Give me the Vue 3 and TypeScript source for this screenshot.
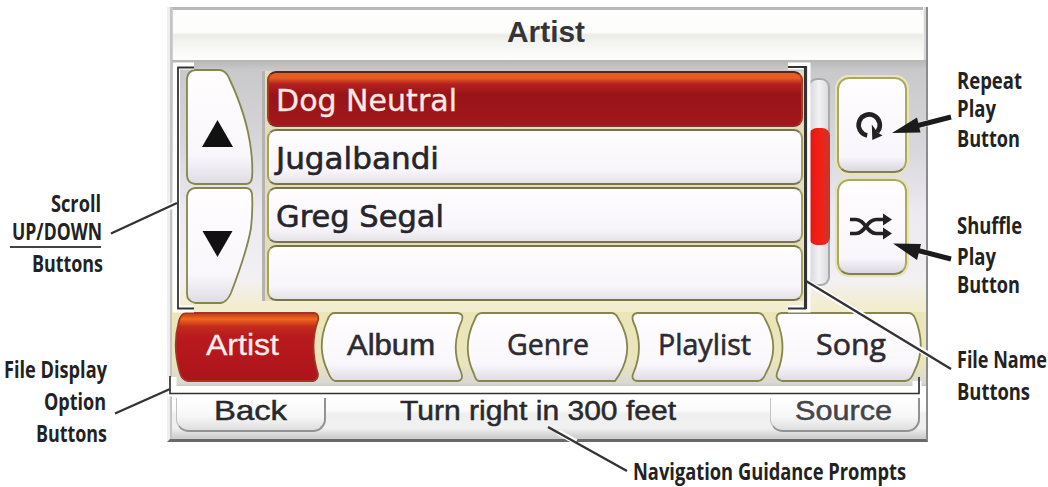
<script setup lang="ts">
import { h, type FunctionalComponent } from 'vue'

interface FitProps { text: string; w: number; cap: number; size: number }

// One line of text set to an exact measure; the box spans cap height to baseline.
const FitText: FunctionalComponent<FitProps> = (p) =>
  h('svg', { width: p.w, height: p.cap, style: 'overflow:visible;display:block;flex:none' }, [
    h('text', {
      x: 0, y: p.cap, 'font-size': p.size, fill: 'currentColor',
      textLength: p.w, lengthAdjust: 'spacingAndGlyphs',
    }, p.text),
  ])
FitText.props = ['text', 'w', 'cap', 'size']

const files = [
  { name: 'Dog Neutral', w: 181, active: true },
  { name: 'Jugalbandi', w: 163, active: false },
  { name: 'Greg Segal', w: 168, active: false },
  { name: '', w: 0, active: false },
]

interface Tab { name: string; w: number; x: number; tw: number; d: string; font: string; active?: boolean }
const tabs: Tab[] = [
  { name: 'Artist', w: 146, x: 31, tw: 73, font: 'arial', active: true,
    d: 'M10 1 H140 Q144 2 143 8 Q134 34 143 62 Q143 68 138 69 H13 Q7 68 5 61 Q-3 34 4 9 Q6 2 10 1Z' },
  { name: 'Album', w: 146, x: 26, tw: 88, font: 'arial',
    d: 'M13 1 H137 Q143 2 141 8 Q129 35 140 60 Q143 68 137 69 H14 Q10 68 7 60 Q-5 35 6 9 Q9 1 13 1Z' },
  { name: 'Genre', w: 165, x: 40, tw: 82, font: 'humanist',
    d: 'M15 1 H144 Q149 1 151 6 Q169 35 152 63 L148 69 H12 Q9 69 7 62 Q-6 35 8 7 Q10 1 15 1Z' },
  { name: 'Playlist', w: 144, x: 26, tw: 93, font: 'humanist',
    d: 'M5 1 H126 Q131 1 133 7 Q149 35 134 61 Q131 69 126 69 H5 Q-1 68 1 62 Q13 35 1 9 Q-1 2 5 1Z' },
  { name: 'Song', w: 146, x: 40, tw: 70, font: 'humanist',
    d: 'M5 1 H132 Q137 1 139 6 Q151 35 138 60 Q135 69 129 69 H6 Q-1 67 1 61 Q12 35 1 9 Q-1 2 5 1Z' },
]
</script>

<template>
  <figure class="figure">
    <svg class="defs" width="0" height="0">
      <defs>
        <linearGradient id="key" x1="0" y1="0" x2="0" y2="1">
          <stop offset="0" stop-color="#fffdfd" /><stop offset=".75" stop-color="#faf7fc" /><stop offset="1" stop-color="#dedce2" />
        </linearGradient>
        <linearGradient id="hot" x1="0" y1="0" x2="0" y2="1">
          <stop offset="0" stop-color="#bd3a12" /><stop offset=".09" stop-color="#f0681f" /><stop offset=".2" stop-color="#c32a1c" />
          <stop offset=".35" stop-color="#b81a1e" /><stop offset="1" stop-color="#ad141b" />
        </linearGradient>
      </defs>
    </svg>

    <aside class="notes notes-left">
      <div class="note scroll-note">
        <FitText text="Scroll" :w="50" :cap="17" :size="24" />
        <FitText class="up-down" text="UP/DOWN" :w="90" :cap="17" :size="24" />
        <i class="rule"></i>
        <FitText class="nudge" text="Buttons" :w="71" :cap="17" :size="24" />
      </div>
      <div class="note option-note">
        <FitText text="File Display" :w="103" :cap="17" :size="24" />
        <FitText class="option-word" text="Option" :w="62" :cap="17" :size="24" />
        <FitText text="Buttons" :w="71" :cap="17" :size="24" />
      </div>
    </aside>

    <main class="device">
      <header class="title"><FitText text="Artist" :w="78" :cap="21" :size="29" /></header>

      <section class="panel">
        <nav class="scrollers">
          <button class="scroller" aria-label="Up">
            <svg width="68" height="118" viewBox="0 0 68 118">
              <path class="key" d="M9 2 H34 Q40 3 43 10 Q61 48 65 82 Q67 98 66 110 Q65 116 60 116 H9 Q1 115 1 107 V10 Q2 3 9 2Z" />
              <path fill="#111" d="M31.5 52 L47 79 H16Z" />
            </svg>
          </button>
          <button class="scroller" aria-label="Down">
            <svg width="68" height="118" viewBox="0 0 68 118">
              <path class="key" d="M9 2 H60 Q65 2 66 8 Q67 23 65 42 Q61 65 45 107 Q41 116 35 117 H9 Q1 115 1 108 V10 Q2 3 9 2Z" />
              <path fill="#111" d="M16.5 45 H46.5 L31.5 71Z" />
            </svg>
          </button>
        </nav>
        <ul class="files">
          <li v-for="(f, i) in files" :key="i" class="file" :class="{ active: f.active }">
            <FitText v-if="f.name" :text="f.name" :w="f.w" :cap="22" :size="30" />
          </li>
        </ul>
        <div class="track"><div class="thumb"></div></div>
        <div class="modes">
          <button class="mode" aria-label="Repeat">
            <svg class="repeat-icon" width="30" height="30" viewBox="0 0 30 30">
              <path d="M13.2 25.4 A10.6 10.6 0 1 1 23.2 22" fill="none" stroke="#222" stroke-width="4.6" />
              <path d="M17.8 14.5 L18.3 30 L28.5 25.5 L23.6 22.5Z" fill="#222" />
            </svg>
          </button>
          <button class="mode" aria-label="Shuffle">
            <svg width="44" height="28" viewBox="0 0 44 28">
              <path d="M1 6.5 H7 C16 6.5 18 20.500 27 20.500 H36 M1 20.500 H7 C16 20.500 18 6.500 27 6.500 H36" fill="none" stroke="#222" stroke-width="3.700" />
              <path d="M34 .5 L43 6.500 L34 12.500Z M34 14.500 L43 20.500 L34 26.500Z" fill="#222" />
            </svg>
          </button>
        </div>
      </section>

      <nav class="tabs">
        <button v-for="t in tabs" :key="t.name" class="tab" :class="[t.font, { active: t.active }]">
          <svg :width="t.w" height="71">
            <path :d="t.d" />
            <text :x="t.x" y="42.5" :textLength="t.tw" lengthAdjust="spacingAndGlyphs">{{ t.name }}</text>
          </svg>
        </button>
      </nav>

      <footer class="status">
        <button class="soft"><FitText text="Back" :w="73" :cap="20" :size="28" /></button>
        <FitText class="prompt" text="Turn right in 300 feet" :w="276" :cap="20" :size="27.5" />
        <button class="soft source"><FitText text="Source" :w="97" :cap="20" :size="28" /></button>
      </footer>
    </main>

    <aside class="notes notes-right">
      <div class="note repeat-note">
        <FitText text="Repeat" :w="65" :cap="17" :size="24" />
        <FitText class="tight" text="Play" :w="39" :cap="17" :size="24" />
        <FitText text="Button" :w="63" :cap="17" :size="24" />
      </div>
      <div class="note shuffle-note">
        <FitText class="wide" text="Shuffle" :w="65" :cap="17" :size="24" />
        <FitText text="Play" :w="39" :cap="17" :size="24" />
        <FitText text="Button" :w="63" :cap="17" :size="24" />
      </div>
      <div class="note file-note">
        <FitText text="File Name" :w="90" :cap="17" :size="24" />
        <FitText text="Buttons" :w="73" :cap="17" :size="24" />
      </div>
    </aside>

    <figcaption class="caption">
      <FitText text="Navigation Guidance Prompts" :w="273" :cap="17" :size="24" />
    </figcaption>

    <svg class="callouts" width="1048" height="487">
      <g fill="none" stroke="#fff">
        <path stroke-width="7" d="M194 66 H176.500 V309 H194" />
        <path stroke-width="7" d="M788 66 H807 V309 H788" />
        <path stroke-width="9" d="M172 377 V392 H917 V381" />
        <path stroke-width="6" d="M807 282 L929 355 M558 432 L576 442 M165 209 L176 204 M898 130.500 L948 118 M898 246 L948 258" />
      </g>
      <g fill="none" stroke="#333">
        <path stroke-width="1.800" d="M194 67.500 H178 V308.500 H194" />
        <path stroke-width="1.700" d="M170 376 V393.500 H919 V377" />
        <path stroke-width="2" d="M788 67 H805 M788 308.500 H806" />
        <path stroke-width="3.200" d="M805.500 66 V309" />
        <path stroke-width="2.400" d="M111 233.500 L177 203 M115 413.500 L170 389 M806 281 L951 369 M548 427 L627 471" />
        <path stroke-width="5" stroke="#1b1b1b" d="M916 126 L951 117 M916 250 L951 259" />
      </g>
      <path fill="#1b1b1b" d="M892 133 L917 117.500 L920.500 132.500Z M893 243.500 L921 244 L917 260Z" />
    </svg>
  </figure>
</template>

<style>
body { background: #fff; }
</style>

<style scoped>
.figure {
  position: relative;
  display: grid;
  grid-template-columns: 167px 761px 120px;
  grid-template-rows: 442px 45px;
  width: 1048px;
  height: 487px;
  margin: 0;
  overflow: hidden;
  font-family: "Liberation Sans", sans-serif;
  color: #222;
}
.defs, .callouts { position: absolute; left: 0; top: 0; pointer-events: none; }
button { border: 0; padding: 0; background: none; font: inherit; color: inherit; display: block; }

.notes, .caption { font-family: "Open Sans", sans-serif; font-weight: 700; color: #222; }
.note { display: flex; flex-direction: column; }
.notes-left .note { align-items: flex-end; }
.scroll-note { padding: 195px 66px 0 0; }
.up-down { margin-top: 11px; margin-right: -1px; }
.rule { width: 91px; height: 2px; margin: 6px 0 7px; background: #444; }
.nudge { margin-right: -2px; }
.option-note { padding: 89px 60px 0 0; gap: 15px; }
.option-word { margin-right: 1px; }
.notes-right { padding-left: 29px; }
.repeat-note { padding-top: 72px; gap: 13px; }
.tight { margin-top: -2px; }
.shuffle-note { padding-top: 70px; gap: 11px; }
.wide { margin-bottom: 3px; }
.file-note { padding-top: 58px; gap: 15px; }
.caption { grid-column: 2 / 4; padding: 21px 0 0 466px; }

.device {
  display: flex;
  flex-direction: column;
  box-sizing: border-box;
  margin-top: 7px;
  padding-left: 2px;
  border-left: 3px solid #eeeeee;
  border-right: 2px solid #8b8b8d;
  border-bottom: 3px solid #69696b;
  background: linear-gradient(90deg, #c4c4c6 0 2px, #f2f2f4 2px);
  box-shadow: inset -2px 0 #d8d8d8;
}
.title {
  display: flex;
  justify-content: center;
  box-sizing: border-box;
  height: 53px;
  padding: 11px 4px 0 0;
  margin-right: 3px;
  border-top: 3px solid #b9b9b9;
  border-left: 1px solid #d0d0d0;
  background: linear-gradient(#fdfdfb 0 22px, #ebebe8 25px, #f3f3f0 32px, #fefefd 50px);
  color: #353539;
  font-weight: 700;
}
.panel {
  display: flex;
  align-items: flex-start;
  box-sizing: border-box;
  height: 252px;
  padding: 8px 0 0 14px;
  background: linear-gradient(#b6b6b6, #c9c9cb 10px, #d8d8dc 90px, #ece9f0 150px, #f3f0f3 220px, #f2edcf 246px);
}
.scrollers { display: flex; flex-direction: column; width: 68px; }
.scroller, .scroller svg { display: block; height: 118px; }
.key { fill: url(#key); stroke: #85864d; stroke-width: 1.8; }
.files {
  display: flex;
  flex-direction: column;
  gap: 2px;
  box-sizing: border-box;
  width: 541px;
  margin: 3px 0 0 8px;
  padding: 0 0 0 2px;
  list-style: none;
  background: #e3ddbd;
  border-left: 3px solid #b5b3b0;
}
.file {
  box-sizing: border-box;
  height: 56px;
  padding: 16px 0 0 7px;
  border: 2px solid #777548;
  border-left-color: #a3a35e;
  border-right-color: #a3a35e;
  border-radius: 9px;
  background: linear-gradient(#fffdfd, #f8f5fb 75%, #e5e2e8);
  color: #25252b;
  font-family: "DejaVu Sans", sans-serif;
  stroke: currentColor;
  stroke-width: .6px;
}
.file.active {
  border-color: #612019 #a83b22 #74382b;
  background: linear-gradient(#e45e24 0 5px, #b5201f 11px, #971419 22px, #a2171b);
  color: #ffe9e4;
  stroke-width: .3px;
}
.track {
  box-sizing: border-box;
  flex: none;
  width: 22px;
  height: 208px;
  margin: 10px 0 0 5px;
  padding-top: 48px;
  border: 2px solid #aaa9ae;
  border-radius: 9px;
  background: linear-gradient(90deg, #d8d8dc, #f2f2f4 50%, #dcdce0);
}
.thumb {
  width: 21px;
  height: 117px;
  margin-left: -1px;
  border-radius: 8px;
  background: linear-gradient(90deg, #c91820, #f01a12 25%, #ef2418 65%, #b83a34);
}
.modes { display: flex; flex-direction: column; gap: 6px; margin: 9px 0 0 7px; }
.mode {
  display: grid;
  place-items: center;
  box-sizing: border-box;
  width: 70px;
  height: 96px;
  border: 2px solid #aaa960;
  border-bottom-color: #818052;
  outline: 2px solid #e8e4b8;
  border-radius: 12px;
  background: linear-gradient(#fffdfe, #f9f6fc 84%, #dad8de);
}
.mode svg { display: block; margin-right: 2px; }
.mode .repeat-icon { margin-right: 6px; }
.tabs {
  display: flex;
  box-sizing: border-box;
  height: 74px;
  padding-left: 3px;
  background: linear-gradient(#ebe5b9, #ebe5bd 50px, #d9d8d3 71px, #c9c9c6);
}
.tab { height: 71px; }
.tab svg { display: block; overflow: visible; }
.tab path { fill: url(#key); stroke: #85864d; stroke-width: 1.8; }
.tab text { font-size: 30px; fill: #2b2b31; stroke: #2b2b31; stroke-width: .6px; }
.tab.humanist { font-family: "Open Sans", sans-serif; font-weight: 500; }
.tab.active path { fill: url(#hot); stroke: #a33525; }
.tab.active text { fill: #ffeeea; stroke: #ffeeea; stroke-width: .3px; }
.status {
  display: flex;
  align-items: flex-start;
  flex: 1;
  padding: 12px 0 0 4px;
  background: linear-gradient(#fff 0 10px, #fbfbfb 24px, #efefef 28px, #f1f1f1 42px, #cfcfcf 51px);
  color: #29292d;
  stroke: currentColor;
  stroke-width: .5px;
}
.soft {
  display: flex;
  justify-content: center;
  box-sizing: border-box;
  width: 150px;
  height: 34px;
  padding-top: 2px;
  border: 1px solid #c2c2c2;
  border-top: 0;
  border-right: 2px solid #929292;
  border-bottom: 2px solid #929292;
  border-radius: 0 0 13px 13px;
  background: linear-gradient(#fff, #f6f6f6 60%, #dedede);
}
.prompt { margin: 2px 94px 0 74px; }
.source { padding-right: 3px; color: #444449; }
</style>
